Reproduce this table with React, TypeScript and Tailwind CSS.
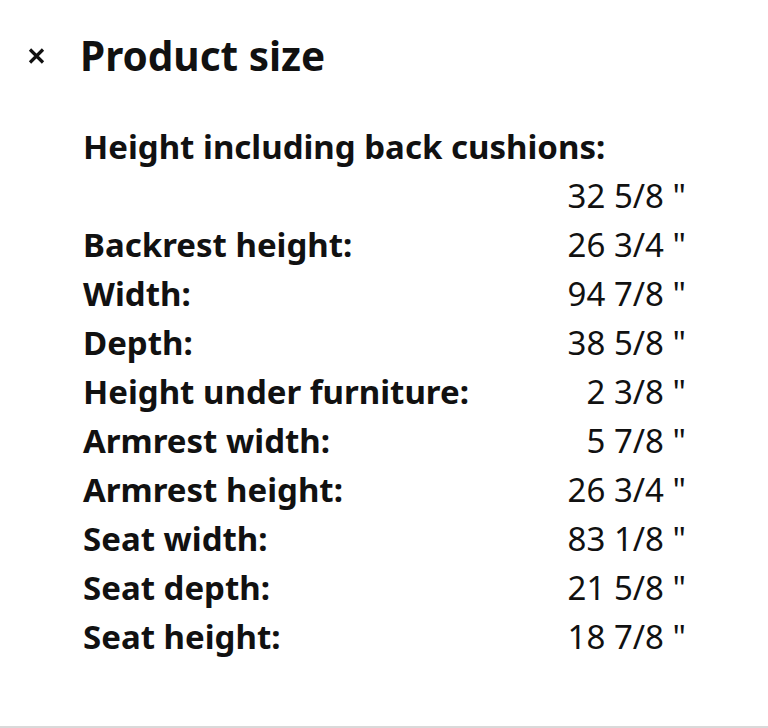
import React from "react";

const rows: [string, string][] = [
  ["Height including back cushions:", "32 5/8 \""],
  ["Backrest height:", "26 3/4 \""],
  ["Width:", "94 7/8 \""],
  ["Depth:", "38 5/8 \""],
  ["Height under furniture:", "2 3/8 \""],
  ["Armrest width:", "5 7/8 \""],
  ["Armrest height:", "26 3/4 \""],
  ["Seat width:", "83 1/8 \""],
  ["Seat depth:", "21 5/8 \""],
  ["Seat height:", "18 7/8 \""],
];

export default function App() {
  return (
    <div
      className="w-[768px] h-[728px] bg-white text-[#111111] flex flex-col border-b-2 border-[#d9d9d9]"
      style={{ fontFamily: '"Noto Sans", sans-serif' }}
    >
      <div className="flex items-center h-[60px] mt-[26px]">
        <div className="w-[80px] flex items-center pl-[28px]">
          <svg width="17" height="16" viewBox="0 0 17 16">
            <path d="M2 1.5 L15 14.5 M15 1.5 L2 14.5" stroke="#111" strokeWidth="3.2" />
          </svg>
        </div>
        <h1 className="text-[40.5px] font-bold leading-none">Product size</h1>
      </div>
      <div className="ml-[83px] w-[603px] mt-[36px] flex flex-col">
        {rows.map(([label, value]) => (
          <div key={label} className="flex flex-wrap justify-between text-[33px] leading-[49px]">
            <span className="font-bold">{label}</span>
            <span className="ml-auto whitespace-pre">{value}</span>
          </div>
        ))}
      </div>
    </div>
  );
}
